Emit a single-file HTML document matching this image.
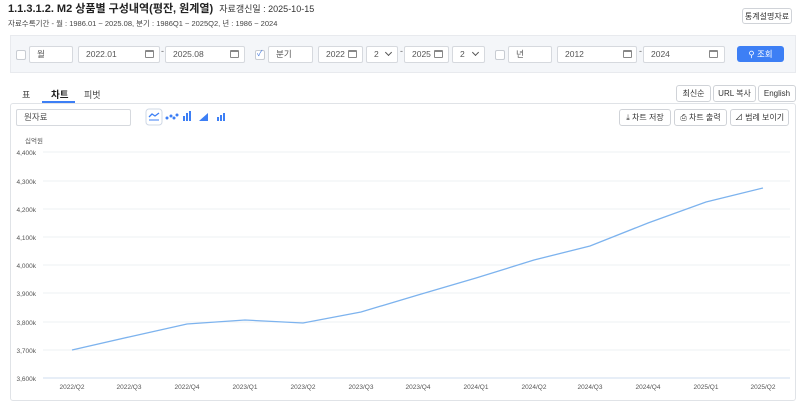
<!DOCTYPE html>
<html><head><meta charset="utf-8"><style>
*{box-sizing:border-box;margin:0;padding:0}
body{width:800px;height:404px;overflow:hidden;background:#fff;font-family:"Liberation Sans","Noto Sans CJK KR",sans-serif;color:#333;position:relative}
.a{position:absolute}
.box{position:absolute;border:1px solid #d6d9de;background:#fff;border-radius:2px;font-size:8.5px;color:#555;padding-left:7px;line-height:15px}
.btn{position:absolute;border:1px solid #d0d3d8;border-radius:3px;background:#fff;font-size:8px;color:#333;text-align:center;line-height:16px}
.cb{position:absolute;width:10px;height:10px;border:1px solid #c8ccd2;border-radius:2px;background:#fff}
.cal{position:absolute;width:9px;height:8px;border:1px solid #888;border-top-width:2px;border-radius:1px}
.chev{position:absolute;width:5px;height:5px;border-right:1.3px solid #555;border-bottom:1.3px solid #555;transform:rotate(45deg)}
.dash{position:absolute;font-size:9px;color:#666}
</style></head><body>
<div class="a" style="left:8px;top:2px;font-size:11px;line-height:14px;font-weight:bold;color:#222">1.1.3.1.2. M2 상품별 구성내역(평잔, 원계열) <span style="font-size:9px;font-weight:normal;color:#333;margin-left:3px">자료갱신일 : 2025-10-15</span></div>
<div class="a" style="left:8px;top:19px;font-size:7.5px;line-height:10px;color:#444">자료수록기간 - 월 : 1986.01 ~ 2025.08, 분기 : 1986Q1 ~ 2025Q2, 년 : 1986 ~ 2024</div>
<div class="btn" style="left:742px;top:8px;width:50px;height:16px">통계설명자료</div>

<div class="a" style="left:10px;top:35px;width:786px;height:38px;background:#f4f6f9;border:1px solid #e8eaee"></div>
<div class="cb" style="left:16px;top:50px"></div>
<div class="box" style="left:29px;top:46px;width:44px;height:17px">월</div>
<div class="box" style="left:78px;top:46px;width:82px;height:17px">2022.01</div><div class="cal" style="left:145px;top:50px"></div>
<div class="dash" style="left:161px;top:46px">-</div>
<div class="box" style="left:165px;top:46px;width:80px;height:17px">2025.08</div><div class="cal" style="left:230px;top:50px"></div>
<div class="cb" style="left:255px;top:50px"></div><div class="a" style="left:257px;top:48px;font-size:8px;color:#4a7de0">✓</div>
<div class="box" style="left:268px;top:46px;width:45px;height:17px">분기</div>
<div class="box" style="left:318px;top:46px;width:45px;height:17px">2022</div><div class="cal" style="left:348px;top:50px"></div>
<div class="box" style="left:366px;top:46px;width:32px;height:17px">2</div><div class="chev" style="left:386px;top:50px"></div>
<div class="dash" style="left:400px;top:46px">-</div>
<div class="box" style="left:404px;top:46px;width:45px;height:17px">2025</div><div class="cal" style="left:434px;top:50px"></div>
<div class="box" style="left:452px;top:46px;width:33px;height:17px">2</div><div class="chev" style="left:473px;top:50px"></div>
<div class="cb" style="left:495px;top:50px"></div>
<div class="box" style="left:508px;top:46px;width:44px;height:17px">년</div>
<div class="box" style="left:557px;top:46px;width:80px;height:17px">2012</div><div class="cal" style="left:623px;top:50px"></div>
<div class="dash" style="left:639px;top:46px">-</div>
<div class="box" style="left:643px;top:46px;width:82px;height:17px">2024</div><div class="cal" style="left:709px;top:50px"></div>
<div class="a" style="left:737px;top:46px;width:47px;height:16px;background:#3d7ff5;border-radius:3px;color:#fff;font-size:8.5px;text-align:center;line-height:16px">&#9906; 조회</div>

<div class="a" style="left:22px;top:88px;font-size:9px;color:#444">표</div>
<div class="a" style="left:51px;top:87px;font-size:9.5px;font-weight:bold;color:#222">차트</div>
<div class="a" style="left:42px;top:101px;width:33px;height:2px;background:#3d7ff5"></div>
<div class="a" style="left:84px;top:88px;font-size:9px;color:#444">피벗</div>
<div class="btn" style="left:676px;top:85px;width:35px;height:17px">최신순</div>
<div class="btn" style="left:713px;top:85px;width:43px;height:17px">URL 복사</div>
<div class="btn" style="left:758px;top:85px;width:38px;height:17px">English</div>

<div class="a" style="left:10px;top:103px;width:786px;height:298px;border:1px solid #e0e3e7;border-radius:3px"></div>
<div class="box" style="left:16px;top:109px;width:115px;height:17px">원자료</div>
<svg class="a" style="left:145px;top:108px" width="90" height="20">
<rect x="1" y="1" width="16" height="16" rx="3" fill="#fff" stroke="#cfd8e6"/>
<path d="M4 9 L7 6 L10 8 L14 5" stroke="#3d7ff5" fill="none" stroke-width="1.3"/><line x1="4" y1="12" x2="14" y2="12" stroke="#3d7ff5"/>
<circle cx="22" cy="10" r="1.5" fill="#3d7ff5"/><circle cx="26" cy="8" r="1.5" fill="#3d7ff5"/><circle cx="29" cy="10" r="1.5" fill="#3d7ff5"/><circle cx="32" cy="7" r="1.5" fill="#3d7ff5"/>
<rect x="38" y="8" width="2" height="5" fill="#3d7ff5"/><rect x="41" y="5" width="2" height="8" fill="#3d7ff5"/><rect x="44" y="3" width="2" height="10" fill="#3d7ff5"/>
<path d="M54 13 L63 5 L63 13 Z" fill="#3d7ff5"/>
<rect x="72" y="9" width="2" height="4" fill="#3d7ff5"/><rect x="75" y="7" width="2" height="6" fill="#3d7ff5"/><rect x="78" y="5" width="2" height="8" fill="#3d7ff5"/>
</svg>
<div class="btn" style="left:619px;top:109px;width:52px;height:17px">⤓ 차트 저장</div>
<div class="btn" style="left:674px;top:109px;width:53px;height:17px">⎙ 차트 출력</div>
<div class="btn" style="left:730px;top:109px;width:59px;height:17px">⊿ 범례 보이기</div>

<svg class="a" style="left:0;top:0" width="800" height="404" font-family="Liberation Sans, Noto Sans CJK KR, sans-serif">
<text x="25" y="143" font-size="6.5" fill="#555">십억원</text>
<g stroke="#eef0f3" stroke-width="1">
<line x1="43" y1="152" x2="790" y2="152"/><line x1="43" y1="181" x2="790" y2="181"/><line x1="43" y1="209" x2="790" y2="209"/><line x1="43" y1="237" x2="790" y2="237"/><line x1="43" y1="265" x2="790" y2="265"/><line x1="43" y1="293" x2="790" y2="293"/><line x1="43" y1="322" x2="790" y2="322"/><line x1="43" y1="350" x2="790" y2="350"/></g>
<line x1="43" y1="378" x2="790" y2="378" stroke="#cfdcef"/>
<g font-size="6.5" fill="#555" text-anchor="end">
<text x="36" y="155">4,400k</text><text x="36" y="184">4,300k</text><text x="36" y="212">4,200k</text><text x="36" y="240">4,100k</text><text x="36" y="268">4,000k</text><text x="36" y="296">3,900k</text><text x="36" y="325">3,800k</text><text x="36" y="353">3,700k</text><text x="36" y="381">3,600k</text></g>
<g font-size="6.5" fill="#555" text-anchor="middle">
<text x="72" y="389">2022/Q2</text><text x="129" y="389">2022/Q3</text><text x="187" y="389">2022/Q4</text><text x="245" y="389">2023/Q1</text><text x="303" y="389">2023/Q2</text><text x="361" y="389">2023/Q3</text><text x="418" y="389">2023/Q4</text><text x="476" y="389">2024/Q1</text><text x="534" y="389">2024/Q2</text><text x="590" y="389">2024/Q3</text><text x="648" y="389">2024/Q4</text><text x="706" y="389">2025/Q1</text><text x="763" y="389">2025/Q2</text></g>
<polyline fill="none" stroke="#7db3ee" stroke-width="1.3" points="72,350 129,337 187,324 245,320 303,323 361,312 418,295 476,278 534,260 590,246 648,223 706,202 763,188"/>
</svg>
</body></html>
